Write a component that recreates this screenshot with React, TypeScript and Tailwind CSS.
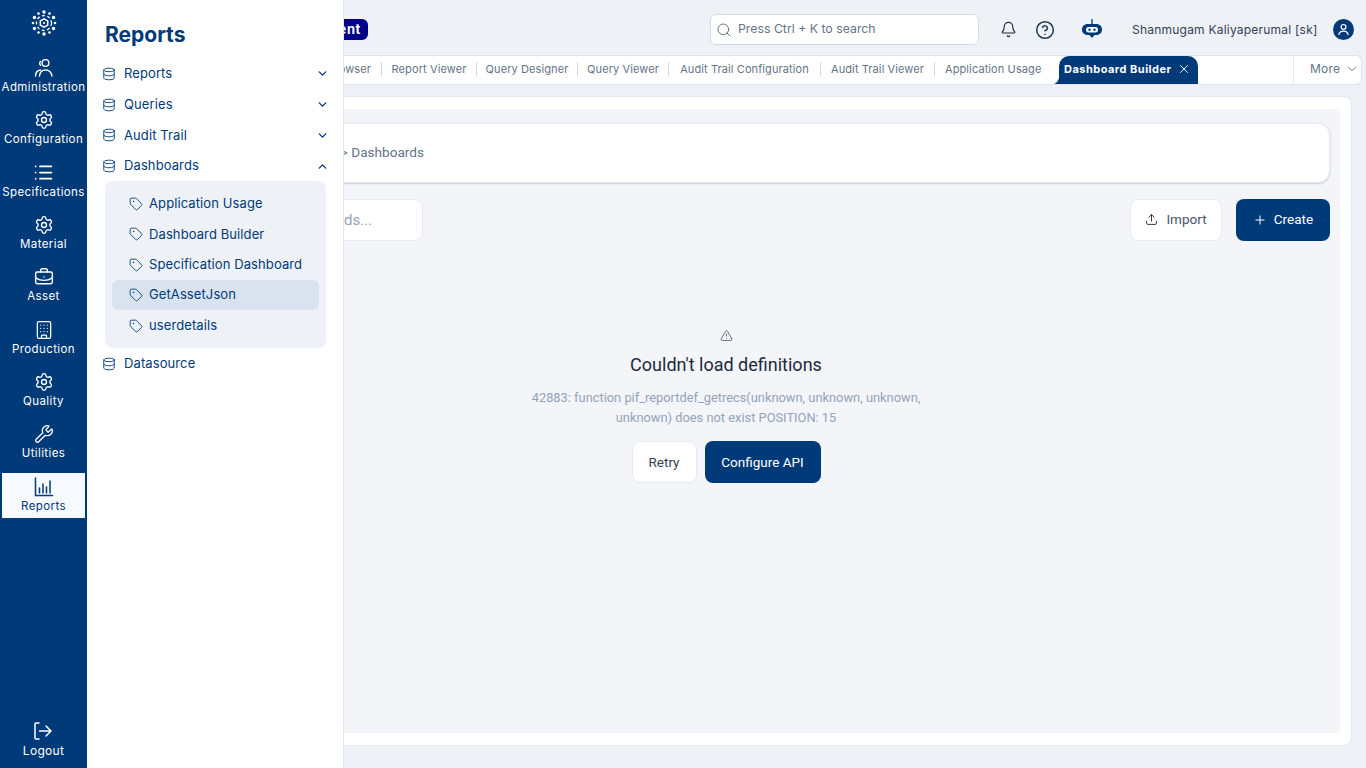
import { BriefcaseBusiness, Building, ChevronDown, ChevronUp, CircleHelp, Bell, Database, List, Plus, Search, Settings, Tag, TriangleAlert, Upload, Wrench, X } from "lucide-react";
import type { ReactNode } from "react";

const poppins = "font-['Inter','Noto_Sans',sans-serif]";

const AdminIcon = () => (
  <svg width="20" height="20" viewBox="0 0 20 20" fill="none" stroke="currentColor" strokeWidth="1.4" strokeLinecap="round">
    <circle cx="11.5" cy="5" r="3.4" />
    <path d="M1.5 18c0-3.6 2.2-5.6 5-6" />
    <path d="M6.5 7.2a2.6 2.6 0 0 1 0-3.8" />
    <path d="M5.5 18c.4-3.8 2.6-6 6-6s5.800 2.200 6.500 6" />
  </svg>
);

const ReportsIcon = () => (
  <svg width="20" height="20" viewBox="0 0 20 20" fill="none" stroke="currentColor" strokeWidth="1.5" strokeLinecap="round">
    <path d="M1.5 1v17.500h17" />
    <path d="M5.500 11v5M9 7v9M12.500 10v6M16 4v12" />
  </svg>
);

const LogoutIcon = () => (
  <svg width="20" height="20" viewBox="0 0 20 20" fill="none" stroke="currentColor" strokeWidth="1.5" strokeLinecap="round" strokeLinejoin="round">
    <path d="M6 2H3a1 1 0 0 0-1 1v14a1 1 0 0 0 1 1h3" />
    <path d="M6.500 10H18M13 5l5 5-5 5" />
  </svg>
);

const Logo = () => {
  const dots = Array.from({ length: 12 }, (_, i) => {
    const a = (i * Math.PI) / 6 + Math.PI / 2;
    return { x: 13 + 11 * Math.cos(a), y: 13 + 11 * Math.sin(a), big: i % 2 === 0 };
  });
  return (
    <svg width="26" height="26" viewBox="0 0 26 26" fill="none" stroke="#fff">
      <circle cx="13" cy="13" r="7.500" strokeWidth="1.300" strokeDasharray="3 2.500" />
      <path d="M13 8.800l3.700 2.100v4.200l-3.700 2.100-3.700-2.100v-4.200z" strokeWidth="1.500" />
      <circle cx="13" cy="13" r="1.100" fill="#fff" stroke="none" />
      {dots.map((d, i) => (
        <circle key={i} cx={d.x} cy={d.y} r={d.big ? 1.700 : 1.300} fill="#fff" stroke="none" />
      ))}
    </svg>
  );
};

const BotIcon = () => (
  <svg width="22" height="22" viewBox="0 0 22 22" fill="none">
    <path d="M11 0v5" stroke="#003a78" strokeWidth="1.300" />
    <path d="M6.500 5h9c3 0 5.500 2.300 5.500 5.500S18.500 16 15.500 16H13.500L11 19l-2.500-3H6.500C3.500 16 1 13.700 1 10.500S3.500 5 6.500 5z" fill="#003a78" />
    <rect x="5" y="8" width="12" height="5.500" rx="2.700" fill="#fff" />
    <circle cx="8.500" cy="10.700" r="1.200" fill="#003a78" />
    <circle cx="13.500" cy="10.700" r="1.200" fill="#003a78" />
  </svg>
);

const UserBadge = () => (
  <div className="flex h-[21px] w-[21px] items-center justify-center rounded-full bg-[#003a78]">
    <svg width="13" height="13" viewBox="0 0 14 14" fill="none" stroke="#fff" strokeWidth="1.300" strokeLinecap="round">
      <circle cx="7" cy="4.200" r="2.600" />
      <path d="M2 12.500c.5-2.500 2.500-3.800 5-3.800s4.500 1.300 5 3.800" />
    </svg>
  </div>
);

type RailItem = { label: string; icon: ReactNode; active?: boolean };

const railItems: RailItem[] = [
  { label: "Administration", icon: <AdminIcon /> },
  { label: "Configuration", icon: <Settings size={20} strokeWidth={1.6} /> },
  { label: "Specifications", icon: <List size={21} strokeWidth={2} /> },
  { label: "Material", icon: <Settings size={20} strokeWidth={1.6} /> },
  { label: "Asset", icon: <BriefcaseBusiness size={20} strokeWidth={1.7} /> },
  { label: "Production", icon: <Building size={20} strokeWidth={1.5} /> },
  { label: "Quality", icon: <Settings size={20} strokeWidth={1.6} /> },
  { label: "Utilities", icon: <Wrench size={20} strokeWidth={1.5} /> },
  { label: "Reports", icon: <ReportsIcon />, active: true },
];

const tabs = [
  { label: "Query Designer", width: "w-[101px]" },
  { label: "Query Viewer", width: "w-[91px]" },
  { label: "Audit Trail Configuration", width: "w-[152px]" },
  { label: "Audit Trail Viewer", width: "w-[114px]" },
];

const groups = [
  { label: "Reports", open: false },
  { label: "Queries", open: false },
  { label: "Audit Trail", open: false },
  { label: "Dashboards", open: true },
];

const subItems = ["Application Usage", "Dashboard Builder", "Specification Dashboard", "GetAssetJson", "userdetails"];

const Rail = () => (
  <aside className={`${poppins} flex h-full w-[87px] shrink-0 flex-col items-center bg-[#003a78] text-white`}>
    <div className="flex h-[53.600px] items-start pt-[10px]">
      <Logo />
    </div>
    <nav className="flex w-full flex-col items-center gap-[7.400px]">
      {railItems.map((item) => (
        <div
          key={item.label}
          className={`flex h-[45px] w-[83px] flex-col items-center justify-center gap-[1px] text-[11.500px] leading-[16px] tracking-[0.4px] ${
            item.active ? "bg-[#f6f9fd] text-[#003a78]" : ""
          }`}
        >
          {item.icon}
          <span className="whitespace-nowrap">{item.label}</span>
        </div>
      ))}
    </nav>
    <div className="mt-auto flex flex-col items-center gap-[2px] pb-[9px] text-[12px] leading-[16px] tracking-[0.3px]">
      <LogoutIcon />
      <span>Logout</span>
    </div>
  </aside>
);

const Flyout = () => (
  <div className={`${poppins} absolute bottom-0 left-[87px] top-0 z-10 w-[257px] border-r border-[#dfe5ee] bg-white px-[15px] text-[#003a78]`}>
    <h2 className="pl-[3px] pt-[20px] text-[21px] font-bold leading-[30px]">Reports</h2>
    <ul className="mt-[8.600px]">
      {groups.map((g) => (
        <li key={g.label} className="flex h-[30.700px] items-center text-[13px] tracking-[0.1px]">
          <Database size={14} strokeWidth={1.5} />
          <span className="ml-[8px] flex-1">{g.label}</span>
          <span className="mr-[-1px]">
            {g.open ? <ChevronUp size={13} strokeWidth={2.500} /> : <ChevronDown size={13} strokeWidth={2.500} />}
          </span>
        </li>
      ))}
    </ul>
    <div className="ml-[3px] mr-[2px] rounded-lg bg-[#eef1f6] px-[7px] py-[7.500px]">
      {subItems.map((s) => (
        <div
          key={s}
          className={`flex h-[30.400px] items-center gap-[6px] rounded-md pl-[17px] text-[13px] tracking-[0.1px] ${
            s === "GetAssetJson" ? "bg-[#d9e3ef]" : ""
          }`}
        >
          <Tag size={14} strokeWidth={1.5} />
          <span className="whitespace-nowrap">{s}</span>
        </div>
      ))}
    </div>
    <div className="flex h-[30px] items-center pt-[1px] text-[13px] tracking-[0.1px]">
      <Database size={14} strokeWidth={1.5} />
      <span className="ml-[8px]">Datasource</span>
    </div>
  </div>
);

const Header = () => (
  <header className={`${poppins} flex h-[55px] shrink-0 items-center pt-[4px]`}>
    <div className="flex w-[281px] justify-end overflow-hidden">
      <span className="rounded-md bg-[#00008b] px-[7px] py-[1px] text-[13px] font-bold leading-[19px] tracking-[0.6px] text-white">Development</span>
    </div>
    <div className="ml-[342px] flex h-[31px] w-[269px] items-center gap-[6px] rounded-md border border-[#d5dce6] bg-white pl-[5px] text-[12.300px] text-[#64748b]">
      <Search size={16} strokeWidth={1.5} />
      <span>Press Ctrl + K to search</span>
    </div>
    <Bell size={17} strokeWidth={1.6} className="ml-[21px] text-[#1e293b]" />
    <CircleHelp size={20} strokeWidth={1.8} className="ml-[18px] text-[#1e3a4f]" />
    <div className="ml-[26px]">
      <BotIcon />
    </div>
    <span className="ml-[29px] whitespace-nowrap text-[12px] tracking-[0.22px] text-[#334155]">Shanmugam Kaliyaperumal [sk]</span>
    <div className="ml-[15px]">
      <UserBadge />
    </div>
  </header>
);

const Tabs = () => (
  <div className={`${poppins} mr-[4px] flex h-[30px] shrink-0 items-center rounded-r-md border-y border-r border-[#dfe4ec] bg-white text-[11px] tracking-[0.1px] text-[#64748b]`}>
    <div className="mb-[2px] flex h-[14px] w-[295px] items-center justify-end border-r border-[#cfd6e0] pr-[10px]">Report Browser</div>
    <div className="mb-[2px] flex h-[14px] w-[95px] items-center justify-center border-r border-[#cfd6e0]">Report Viewer</div>
    {tabs.map((t) => (
      <div key={t.label} className={`mb-[2px] flex h-[14px] ${t.width} items-center justify-center border-r border-[#cfd6e0] whitespace-nowrap`}>
        {t.label}
      </div>
    ))}
    <div className="mb-[2px] flex w-[124px] items-center whitespace-nowrap pl-[10px]">Application Usage</div>
    <div className="relative flex h-[28px] w-[139px] items-center justify-between rounded-t-[10px] bg-[#003a78] pb-[2px] pl-[5px] pr-[7px] text-[11px] font-bold tracking-[0.48px] text-white">
      <svg width="6" height="10" viewBox="0 0 6 10" className="absolute bottom-0 left-[-5px]">
        <path d="M6 0v10H0c3-1 5-4 6-10z" fill="#003a78" />
      </svg>
      Dashboard Builder
      <X size={14} strokeWidth={1.6} />
    </div>
    <div className="ml-auto flex h-full w-[68px] items-center gap-[5px] border-l border-[#e3e7ee] pb-[2px] pl-[16px] text-[12px] tracking-[0.2px]">
      More
      <ChevronDown size={14} strokeWidth={1.6} />
    </div>
  </div>
);

const Content = () => (
  <div className="mb-[22px] mr-[14px] mt-[11px] flex-1 rounded-lg border border-[#e3e7ef] bg-white px-[11px] py-[12px] font-['Roboto',sans-serif]">
    <div className="flex h-full flex-col bg-[#f3f5f9] pl-[10px] pr-[10px] pt-[14px]">
      <div className="flex h-[60px] shrink-0 items-center justify-end rounded-xl border border-[#e6eaf0] bg-white pb-[2px] pr-[905px] text-[13.600px] text-[#64748b] shadow-[0_1px_2px_rgba(100,116,139,0.3)]">
        Reports &gt; Dashboards
      </div>
      <div className="mt-[16px] flex shrink-0 items-center justify-between">
        <div className="flex h-[42px] w-[314px] items-center justify-end rounded-lg border border-[#e6eaf0] bg-white pr-[50px] text-[15px] text-[#94a3b8]">
          Search dashboards...
        </div>
        <div className="flex gap-[14px] text-[13.500px]">
          <button className="flex h-[42px] w-[92px] items-center justify-center gap-[8px] rounded-lg border border-[#e6eaf0] bg-white pb-[1px] text-[#475569]">
            <Upload size={13} strokeWidth={1.700} className="text-[#1e293b]" />
            Import
          </button>
          <button className="flex h-[42px] w-[94px] items-center justify-center gap-[7px] rounded-lg bg-[#003a78] pb-[1px] text-white">
            <Plus size={14} strokeWidth={1.700} />
            Create
          </button>
        </div>
      </div>
      <div className="mt-[88px] flex flex-col items-center pl-[13px]">
        <TriangleAlert size={13} strokeWidth={1.500} className="text-[#475569]" />
        <h3 className="mt-[9px] text-[18px] leading-[28px] text-[#1e293b]">Couldn't load definitions</h3>
        <p className="mt-[9px] w-[400px] text-center text-[12.850px] leading-[20px] text-[#94a3b8]">
          42883: function pif_reportdef_getrecs(unknown, unknown, unknown, unknown) does not exist POSITION: 15
        </p>
        <div className="mt-[13px] flex gap-[8px] text-[13.500px]">
          <button className="flex h-[42px] w-[65px] items-center justify-center rounded-lg border border-[#e6eaf0] bg-white text-[#334155]">Retry</button>
          <button className="flex h-[42px] w-[116px] items-center justify-center rounded-lg bg-[#003a78] text-white">Configure API</button>
        </div>
      </div>
    </div>
  </div>
);

export default function App() {
  return (
    <div className="relative flex h-screen w-full overflow-hidden bg-[#eef1f6]">
      <Rail />
      <Flyout />
      <main className="flex min-w-0 flex-1 flex-col">
        <Header />
        <Tabs />
        <Content />
      </main>
    </div>
  );
}
